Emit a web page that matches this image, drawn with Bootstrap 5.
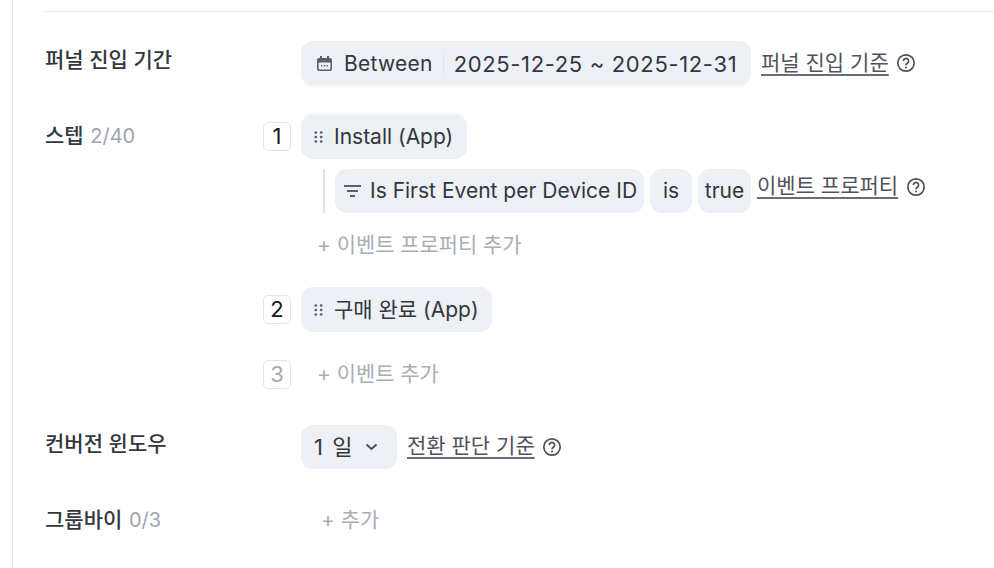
<!DOCTYPE html>
<html lang="ko">
<head>
<meta charset="utf-8">
<title>Funnel</title>
<link href="https://cdn.jsdelivr.net/npm/bootstrap@5.3.0/dist/css/bootstrap.min.css" rel="stylesheet">
<style>
html,body{height:568px;overflow:hidden;background:#fff}
body{font-family:Inter,"Noto Sans CJK KR",sans-serif;font-size:21px;line-height:30px;color:#2f333b}
.shell{margin-left:12px;border-left:1px solid #e3e5ea;height:568px;padding:11px 0 0 32px}
.rule-top{border-top:1px solid #e6e8ec;height:0}
.form-row{display:flex}
.row-label{width:218px;flex:none;font-size:21px;font-weight:500;color:#33373e;height:30px;white-space:nowrap}
.count{font-weight:400;color:#a0a4ad;font-size:20px;margin-left:1px}
.gutter{width:38px;flex:none}
.chip{display:inline-flex;align-items:center;background:#edf0f4;border-radius:12px;height:45px;color:#32363e;white-space:nowrap}
.chip-sm{height:44px}
.between-text{letter-spacing:.25px}
.date-text{font-size:22px;letter-spacing:.65px}
.num{width:28px;height:29px;border:1px solid #e3e5ea;border-radius:5px;display:flex;align-items:center;justify-content:center;color:#16181c;font-size:22px;line-height:1;padding-bottom:1px}
.num-off{color:#a5a9b1}
.under{color:#4f535b;text-decoration:underline;text-decoration-thickness:2px;text-underline-offset:4px;text-decoration-color:#6a6e76;font-size:21px;white-space:nowrap;position:relative;top:-1px}
.muted-add{color:#a9adb5;font-size:20.9px;white-space:nowrap}
.tip{flex:none;display:block}
.tip-up{margin-top:-8px}
.tip-row1{margin-top:-1px}
.help-gap{margin-left:7px}
.sep{width:1px;height:20px;background:#dfe2e7;margin:0 10px;flex:none}
.stem{width:2px;height:44px;background:#dfe2e7;margin-left:22px;margin-right:10px;flex:none}
.day-text{font-size:22px;word-spacing:3px}
.r1{margin-top:29px}
.r2{margin-top:28px}
</style>
</head>
<body>
<div class="shell">
  <div class="rule-top"></div>

  <div class="form-row r1">
    <div class="row-label mt-1">퍼널 진입 기간</div>
    <div class="gutter"></div>
    <div class="d-flex align-items-center">
      <div class="chip" style="width:450px;padding-left:15px">
        <svg width="17" height="18" viewBox="0 0 17 18" class="tip"><path d="M3 3h11a2 2 0 0 1 2 2v9a2 2 0 0 1-2 2H3a2 2 0 0 1-2-2V5a2 2 0 0 1 2-2z" fill="#5b5f67"/><rect x="2.6" y="7.6" width="11.8" height="7" rx="1" fill="#edf0f4"/><rect x="4" y="1" width="2" height="3" fill="#5b5f67"/><rect x="11" y="1" width="2" height="3" fill="#5b5f67"/><rect x="5" y="10" width="1.4" height="1.4" fill="#5b5f67"/><rect x="7.8" y="10" width="1.4" height="1.4" fill="#5b5f67"/><rect x="10.6" y="10" width="1.4" height="1.4" fill="#5b5f67"/></svg>
        <span class="between-text" style="margin-left:11px">Between</span><span class="sep"></span><span class="date-text">2025-12-25 ~ 2025-12-31</span>
      </div>
      <span class="under" style="margin-left:10px">퍼널 진입 기준</span>
      <svg width="20" height="20" viewBox="0 0 20 20" class="tip tip-row1 help-gap"><circle cx="10" cy="10" r="8.200" fill="none" stroke="#4c5058" stroke-width="1.7"/><path d="M7.4 8a2.6 2.6 0 1 1 4 2.2c-.9.6-1.4 1-1.4 2" fill="none" stroke="#4c5058" stroke-width="1.7"/><circle cx="10" cy="14.4" r="1" fill="#4c5058"/></svg>
    </div>
  </div>

  <div class="form-row r2">
    <div class="row-label" style="margin-top:7px">스텝 <span class="count">2/40</span></div>
    <div class="flex-grow-1">
      <div class="d-flex align-items-center">
        <div class="num">1</div>
        <div class="chip" style="margin-left:10px;width:166px;padding-left:13px">
          <svg width="9" height="14" viewBox="0 0 10 14" class="tip"><g fill="#5b5f67"><circle cx="2" cy="2" r="1.5"/><circle cx="8" cy="2" r="1.5"/><circle cx="2" cy="7" r="1.5"/><circle cx="8" cy="7" r="1.5"/><circle cx="2" cy="12" r="1.5"/><circle cx="8" cy="12" r="1.5"/></g></svg>
          <span style="margin-left:11px">Install (App)</span>
        </div>
      </div>
      <div class="d-flex align-items-center" style="margin-top:10px;margin-left:38px">
        <span class="stem"></span>
        <div class="chip chip-sm" style="width:309px;padding-left:9px">
          <svg width="17" height="12" viewBox="0 0 17 12" class="tip"><g fill="#5b5f67"><rect y="0" width="17" height="2"/><rect x="3" y="5" width="11" height="2"/><rect x="6" y="10" width="5" height="2"/></g></svg>
          <span style="margin-left:9px">Is First Event per Device ID</span>
        </div>
        <div class="chip chip-sm justify-content-center" style="width:42px;margin-left:6px">is</div>
        <div class="chip chip-sm justify-content-center" style="width:53px;margin-left:6px">true</div>
        <span class="under" style="margin-left:6px;margin-top:-8px">이벤트 프로퍼티</span>
        <svg width="20" height="20" viewBox="0 0 20 20" class="tip tip-up ms-2"><circle cx="10" cy="10" r="8.200" fill="none" stroke="#4c5058" stroke-width="1.7"/><path d="M7.4 8a2.6 2.6 0 1 1 4 2.2c-.9.6-1.4 1-1.4 2" fill="none" stroke="#4c5058" stroke-width="1.7"/><circle cx="10" cy="14.4" r="1" fill="#4c5058"/></svg>
      </div>
      <div class="muted-add" style="margin:17px 0 0 54px">+ 이벤트 프로퍼티 추가</div>
      <div class="d-flex align-items-center" style="margin-top:27px">
        <div class="num">2</div>
        <div class="chip" style="margin-left:10px;width:191px;padding-left:13px">
          <svg width="9" height="14" viewBox="0 0 10 14" class="tip"><g fill="#5b5f67"><circle cx="2" cy="2" r="1.5"/><circle cx="8" cy="2" r="1.5"/><circle cx="2" cy="7" r="1.5"/><circle cx="8" cy="7" r="1.5"/><circle cx="2" cy="12" r="1.5"/><circle cx="8" cy="12" r="1.5"/></g></svg>
          <span style="margin-left:11px">구매 완료 (App)</span>
        </div>
      </div>
      <div class="d-flex align-items-center" style="margin-top:27px">
        <div class="num num-off">3</div>
        <div class="muted-add" style="margin-left:26px">+ 이벤트 추가</div>
      </div>
    </div>
  </div>

  <div class="form-row" style="margin-top:36px">
    <div class="row-label mt-1">컨버전 윈도우</div>
    <div class="gutter"></div>
    <div class="d-flex align-items-center">
      <div class="chip chip-sm" style="width:96px;padding-left:13px">
        <span class="day-text">1 일</span>
        <svg width="13" height="8" viewBox="0 0 13 8" class="tip" style="margin-left:13px"><path d="M1.500 1.500 6.500 6l5-4.500" fill="none" stroke="#4c5058" stroke-width="2"/></svg>
      </div>
      <span class="under" style="margin-left:10px">전환 판단 기준</span>
      <svg width="20" height="20" viewBox="0 0 20 20" class="tip help-gap"><circle cx="10" cy="10" r="8.200" fill="none" stroke="#4c5058" stroke-width="1.7"/><path d="M7.4 8a2.6 2.6 0 1 1 4 2.2c-.9.6-1.4 1-1.4 2" fill="none" stroke="#4c5058" stroke-width="1.7"/><circle cx="10" cy="14.4" r="1" fill="#4c5058"/></svg>
    </div>
  </div>

  <div class="form-row" style="margin-top:36px">
    <div class="row-label">그룹바이 <span class="count">0/3</span></div>
    <div class="gutter"></div>
    <div class="muted-add" style="margin-left:20px">+ 추가</div>
  </div>
</div>
<script src="https://cdn.jsdelivr.net/npm/bootstrap@5.3.0/dist/js/bootstrap.bundle.min.js"></script>
</body>
</html>
